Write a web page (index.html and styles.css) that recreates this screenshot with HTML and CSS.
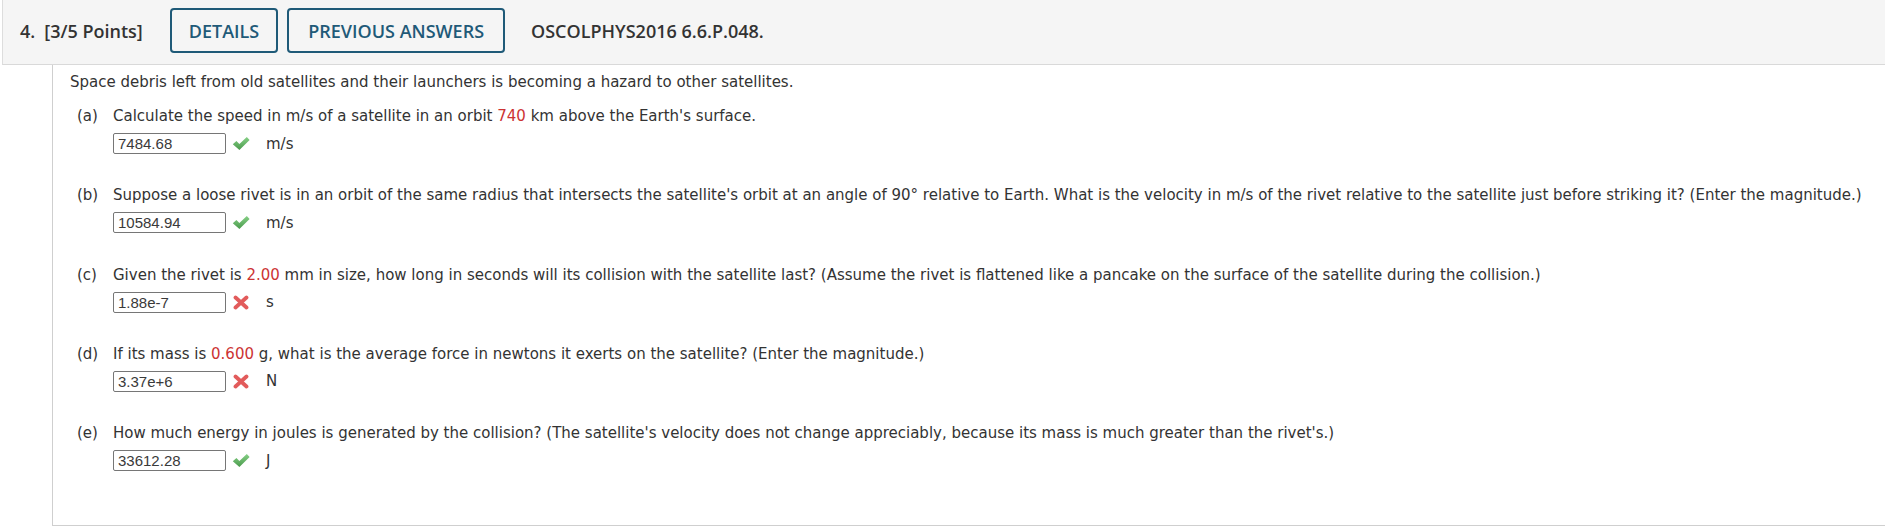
FILE: index.html
```html
<!DOCTYPE html>
<html>
<head>
<meta charset="utf-8">
<link rel="stylesheet" href="styles.css">
</head>
<body>
<div class="header">
  <span class="qnum">4.</span>
  <span class="points">[3/5 Points]</span>
  <span class="btn btn-details">DETAILS</span>
  <span class="btn">PREVIOUS ANSWERS</span>
  <span class="code">OSCOLPHYS2016 6.6.P.048.</span>
</div>
<div class="content">
  <p class="intro">Space debris left from old satellites and their launchers is becoming a hazard to other satellites.</p>

  <div class="part first">
    <span class="label">(a)</span>
    <div class="body">
      <div class="q">Calculate the speed in m/s of a satellite in an orbit <span class="red">740</span> km above the Earth's surface.</div>
      <div class="ans"><span class="box">7484.68</span><svg class="icon" width="18" height="15" viewBox="0 0 18 15"><defs><linearGradient id="g1" x1="0" y1="0" x2="0" y2="1"><stop offset="0" stop-color="#86d086"/><stop offset="1" stop-color="#4a9a4c"/></linearGradient></defs><path d="M0.8 8.2 L4.4 5 L7.4 7.9 L14.8 1 L17.6 4 L7.4 14 Z" fill="url(#g1)"/></svg><span class="unit">m/s</span></div>
    </div>
  </div>

  <div class="part">
    <span class="label">(b)</span>
    <div class="body">
      <div class="q">Suppose a loose rivet is in an orbit of the same radius that intersects the satellite's orbit at an angle of 90° relative to Earth. What is the velocity in m/s of the rivet relative to the satellite just before striking it? (Enter the magnitude.)</div>
      <div class="ans"><span class="box">10584.94</span><svg class="icon" width="18" height="15" viewBox="0 0 18 15"><defs><linearGradient id="g2" x1="0" y1="0" x2="0" y2="1"><stop offset="0" stop-color="#86d086"/><stop offset="1" stop-color="#4a9a4c"/></linearGradient></defs><path d="M0.8 8.2 L4.4 5 L7.4 7.9 L14.8 1 L17.6 4 L7.4 14 Z" fill="url(#g2)"/></svg><span class="unit">m/s</span></div>
    </div>
  </div>

  <div class="part">
    <span class="label">(c)</span>
    <div class="body">
      <div class="q">Given the rivet is <span class="red">2.00</span> mm in size, how long in seconds will its collision with the satellite last? (Assume the rivet is flattened like a pancake on the surface of the satellite during the collision.)</div>
      <div class="ans"><span class="box">1.88e-7</span><svg class="icon" width="18" height="15" viewBox="0 0 18 15"><path d="M3.5 2.5 L14.5 12.5 M14.5 2.5 L3.5 12.5" stroke="#e25b5b" stroke-width="3.8" stroke-linecap="round"/></svg><span class="unit">s</span></div>
    </div>
  </div>

  <div class="part">
    <span class="label">(d)</span>
    <div class="body">
      <div class="q">If its mass is <span class="red">0.600</span> g, what is the average force in newtons it exerts on the satellite? (Enter the magnitude.)</div>
      <div class="ans"><span class="box">3.37e+6</span><svg class="icon" width="18" height="15" viewBox="0 0 18 15"><path d="M3.5 2.5 L14.5 12.5 M14.5 2.5 L3.5 12.5" stroke="#e25b5b" stroke-width="3.8" stroke-linecap="round"/></svg><span class="unit">N</span></div>
    </div>
  </div>

  <div class="part">
    <span class="label">(e)</span>
    <div class="body">
      <div class="q">How much energy in joules is generated by the collision? (The satellite's velocity does not change appreciably, because its mass is much greater than the rivet's.)</div>
      <div class="ans"><span class="box">33612.28</span><svg class="icon" width="18" height="15" viewBox="0 0 18 15"><defs><linearGradient id="g3" x1="0" y1="0" x2="0" y2="1"><stop offset="0" stop-color="#86d086"/><stop offset="1" stop-color="#4a9a4c"/></linearGradient></defs><path d="M0.8 8.2 L4.4 5 L7.4 7.9 L14.8 1 L17.6 4 L7.4 14 Z" fill="url(#g3)"/></svg><span class="unit">J</span></div>
    </div>
  </div>
</div>
</body>
</html>
```
FILE: styles.css
```css
html, body {
  margin: 0;
  padding: 0;
  background: #fff;
}
body {
  font-family: "DejaVu Sans", Verdana, sans-serif;
  font-size: 15px;
  color: #333;
}
.header {
  margin-left: 2px;
  height: 61px;
  padding-bottom: 3px;
  border-left: 1px solid #ddd;
  border-bottom: 1px solid #d9d9d9;
  background: #f5f5f5;
  display: flex;
  align-items: center;
  padding-left: 17px;
  font-family: "Open Sans", sans-serif;
  font-weight: 600;
  font-size: 18px;
  color: #333;
}
.qnum {
  margin-right: 9px;
}
.points {
  margin-right: 27px;
}
.btn {
  box-sizing: border-box;
  height: 45px;
  display: flex;
  align-items: center;
  padding: 0 19px;
  border: 2px solid #1f5a78;
  border-radius: 4px;
  color: #1f5a78;
  margin-right: 9px;
}
.btn-details {
  padding: 0 17px;
}
.btn + .code {
  margin-left: 17px;
}
.content {
  margin-left: 52px;
  border-left: 1px solid #cfcfcf;
  border-bottom: 1px solid #cfcfcf;
  padding: 8px 0 54px 17px;
}
.intro {
  margin: 0;
  line-height: 18px;
}
.part {
  display: flex;
  margin-top: 32.3px;
  margin-left: 7px;
}
.part.first {
  margin-top: 16px;
}
.label {
  width: 36px;
  flex: none;
  line-height: 18px;
  color: #333;
}
.body {
  flex: 1;
}
.q {
  line-height: 18px;
  white-space: nowrap;
}
.red {
  color: #cc3333;
}
.ans {
  display: flex;
  align-items: center;
  margin-top: 8px;
  height: 21px;
}
.box {
  box-sizing: border-box;
  width: 113px;
  height: 21px;
  border: 1px solid #767676;
  border-radius: 2px;
  padding: 0 4px;
  font-family: "Liberation Sans", Arial, sans-serif;
  font-size: 15px;
  line-height: 19px;
  color: #3a3a3a;
}
.icon {
  margin-left: 6px;
  flex: none;
}
.unit {
  margin-left: 16px;
}
```
